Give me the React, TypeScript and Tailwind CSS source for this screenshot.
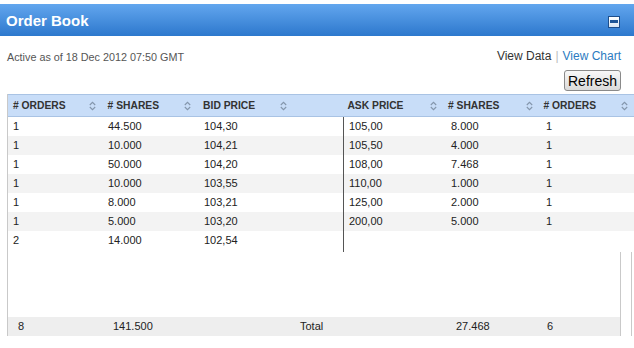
const bids = [
  ["1", "44.500", "104,30"],
  ["1", "10.000", "104,21"],
  ["1", "50.000", "104,20"],
  ["1", "10.000", "103,55"],
  ["1", "8.000", "103,21"],
  ["1", "5.000", "103,20"],
  ["2", "14.000", "102,54"],
];

const asks = [
  ["105,00", "8.000", "1"],
  ["105,50", "4.000", "1"],
  ["108,00", "7.468", "1"],
  ["110,00", "1.000", "1"],
  ["125,00", "2.000", "1"],
  ["200,00", "5.000", "1"],
];

function SortIcon() {
  return (
    <svg width="7" height="10" viewBox="0 0 7 10" className="shrink-0">
      <path d="M0.8 4 L3.5 1.3 L6.2 4" fill="none" stroke="#8496ac" strokeWidth="1.1" />
      <path d="M0.8 6 L3.5 8.7 L6.2 6" fill="none" stroke="#8496ac" strokeWidth="1.1" />
    </svg>
  );
}

function HeadCell({ label, className }: { label: string; className: string }) {
  return (
    <div className={`flex items-center justify-between ${className}`}>
      <span>{label}</span>
      <SortIcon />
    </div>
  );
}

export default function App() {
  return (
    <div className="w-[634px] h-[348px] overflow-hidden bg-white pt-1 font-['Liberation_Sans',Arial,sans-serif] text-[11px] text-[#222]">
      <div className="flex h-8 items-center justify-between bg-gradient-to-b from-[#62a6ee] to-[#2c78cd] pl-[6px] pr-[14px] pt-[3px]">
        <span className="text-[15px] font-bold text-white">Order Book</span>
        <div className="flex h-[12px] w-[12px] items-center justify-center border border-[#1d4e8c] bg-gradient-to-b from-white to-[#d8e6f5]">
          <div className="h-[3px] w-[8px] bg-[#1f5698]" />
        </div>
      </div>

      <div className="flex h-[58px] items-start justify-between pl-[7px] pr-[13px]">
        <span className="mt-[13px] text-[10.8px] text-[#555]">Active as of 18 Dec 2012 07:50 GMT</span>
        <div className="flex flex-col items-end">
          <div className="mt-[11px] text-[12px]">
            <span className="text-[#333]">View Data</span>
            <span className="mx-[4px] text-[#bbb]">|</span>
            <span className="text-[#2b7bbf]">View Chart</span>
          </div>
          <button className="mt-[5px] h-[21px] w-[57px] rounded-[3px] border border-[#8a8a8a] bg-gradient-to-b from-[#f8f8f8] to-[#dadada] text-[14px] leading-none text-black">
            Refresh
          </button>
        </div>
      </div>

      <div className="ml-[7px] border-l border-[#c9c9c9]">
        <div className="flex h-[23px] items-center border-y border-[#a9c3e4] bg-[#c8ddf8] text-[10.3px] font-bold text-[#333]">
          <HeadCell label="# ORDERS" className="w-[95px] pl-[5px] pr-[7px]" />
          <HeadCell label="# SHARES" className="w-[96px] pl-[5px] pr-[7px]" />
          <HeadCell label="BID PRICE" className="w-[96px] pl-[5px] pr-[7px]" />
          <div className="w-[48px]" />
          <HeadCell label="ASK PRICE" className="w-[102px] pl-[6px] pr-[6px]" />
          <HeadCell label="# SHARES" className="w-[96px] pl-[5px] pr-[5px]" />
          <HeadCell label="# ORDERS" className="w-[96px] pl-[5px] pr-[6px]" />
        </div>

        <div className="flex">
          <div className="w-[335px]">
            {bids.map((r, i) => (
              <div key={i} className={`flex h-[19px] items-center ${i % 2 === 1 ? "bg-[#f3f3f3]" : ""}`}>
                <div className="w-[95px] pl-[5px]">{r[0]}</div>
                <div className="w-[96px] pl-[5px]">{r[1]}</div>
                <div className="pl-[5px]">{r[2]}</div>
              </div>
            ))}
          </div>
          <div className="flex-1 border-l border-[#555] pb-[21px]">
            {asks.map((r, i) => (
              <div key={i} className={`flex h-[19px] items-center ${i % 2 === 1 ? "bg-[#f3f3f3]" : ""}`}>
                <div className="w-[101px] pl-[5px]">{r[0]}</div>
                <div className="w-[96px] pl-[6px]">{r[1]}</div>
                <div className="pl-[5px]">{r[2]}</div>
              </div>
            ))}
          </div>
        </div>

        <div className="flex">
          <div className="w-[613px] border-r border-[#c9c9c9]">
            <div className="h-[65px]" />
            <div className="flex h-[19px] items-center bg-[#eeeeee]">
              <div className="w-[105px] pl-[10px]">8</div>
              <div className="w-[187px]">141.500</div>
              <div className="w-[156px]">Total</div>
              <div className="w-[91px]">27.468</div>
              <div>6</div>
            </div>
          </div>
          <div className="ml-[10px] w-px bg-[#c9c9c9]" />
        </div>
      </div>
    </div>
  );
}
